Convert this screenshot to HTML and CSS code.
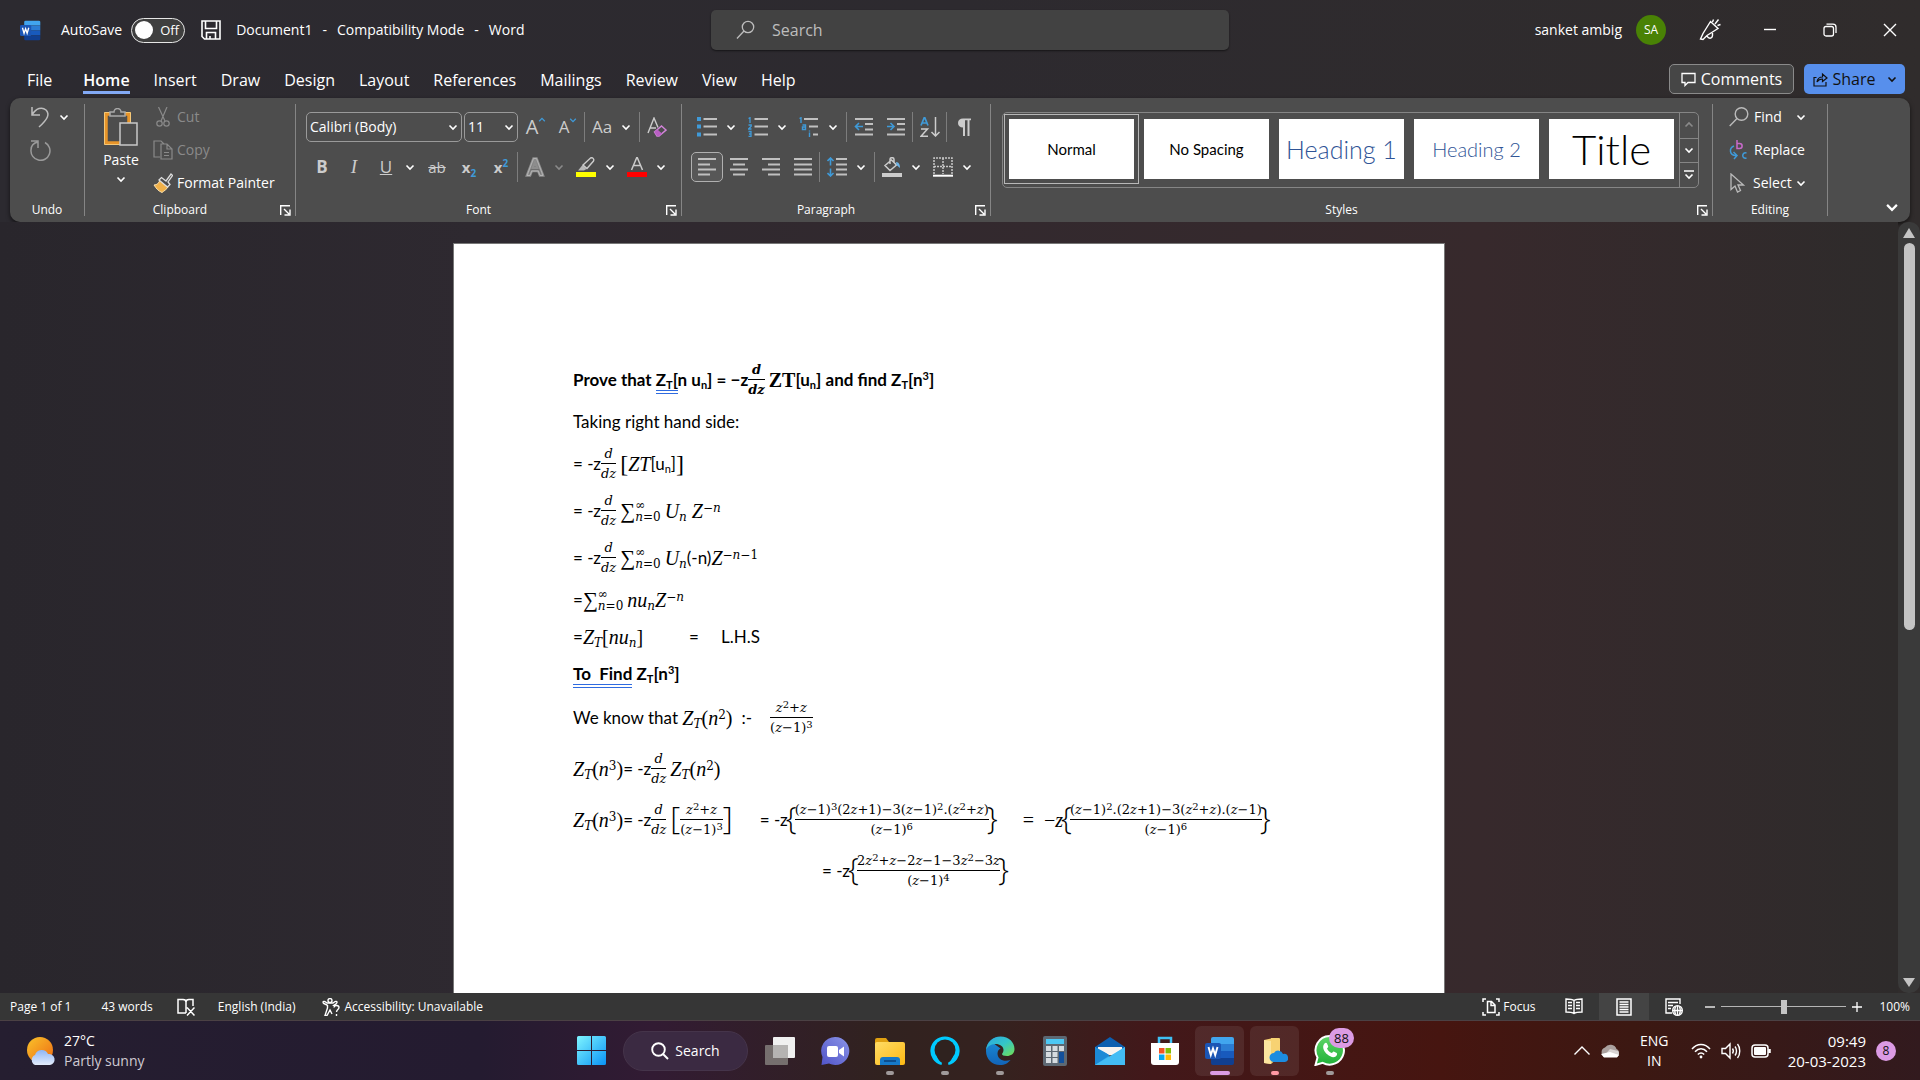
FILE: index.html
```html
<!DOCTYPE html>
<html lang="en">
<head>
<meta charset="utf-8">
<title>Document1 - Compatibility Mode - Word</title>
<link rel="stylesheet" href="styles.css">
</head>
<body>
<svg class="defs" width="0" height="0" aria-hidden="true">
  <defs>
    <symbol id="chev" viewBox="0 0 10 10"><path d="M1.500 3.500 5 7l3.500-3.500" fill="none" stroke="currentColor" stroke-width="1.600"/></symbol>
    <symbol id="chevup" viewBox="0 0 10 10"><path d="M1.500 6.500 5 3l3.500 3.500" fill="none" stroke="currentColor" stroke-width="1.600"/></symbol>
    <symbol id="launch" viewBox="0 0 11 11"><path d="M.7 10V.7H10M4 4l5 5M10 4.500V10H4.500" fill="none" stroke="currentColor" stroke-width="1.400"/></symbol>
    <linearGradient id="gWin" x1="0" y1="0" x2="1" y2="1"><stop offset="0" stop-color="#7ff5ff"/><stop offset="1" stop-color="#0a93f5"/></linearGradient>
    <linearGradient id="gSun" x1="0" y1="0" x2="1" y2="1"><stop offset="0" stop-color="#f9c32b"/><stop offset="1" stop-color="#ee6a12"/></linearGradient>
    <linearGradient id="gCloud" x1="0" y1="0" x2="0" y2="1"><stop offset="0" stop-color="#8fb6f5"/><stop offset="1" stop-color="#e3ecfb"/></linearGradient>
    <linearGradient id="gChat" x1="1" y1="0" x2="0" y2="1"><stop offset="0" stop-color="#8b94e8"/><stop offset="1" stop-color="#5054c8"/></linearGradient>
    <linearGradient id="gFold" x1="0" y1="0" x2="1" y2="1"><stop offset="0" stop-color="#ffdc66"/><stop offset="1" stop-color="#fdb913"/></linearGradient>
    <linearGradient id="gEdge" x1="0" y1="0" x2="1" y2="1"><stop offset="0" stop-color="#2ba5e0"/><stop offset=".5" stop-color="#34c6c8"/><stop offset="1" stop-color="#74e04e"/></linearGradient>
    <linearGradient id="gEdge2" x1="0" y1="0" x2="0" y2="1"><stop offset="0" stop-color="#1b8fd8"/><stop offset="1" stop-color="#1264b8"/></linearGradient>
    <linearGradient id="gWa" x1="0" y1="0" x2="0" y2="1"><stop offset="0" stop-color="#5fd668"/><stop offset="1" stop-color="#20b038"/></linearGradient>
    <symbol id="word" viewBox="0 0 30 30">
      <path d="M8 1h19a2 2 0 0 1 2 2v5H6V3a2 2 0 0 1 2-2z" fill="#41a5ee"/><path d="M6 8h23v7H6z" fill="#2b7cd3"/><path d="M6 15h23v7H6z" fill="#185abd"/><path d="M6 22h23v5a2 2 0 0 1-2 2H8a2 2 0 0 1-2-2z" fill="#103f91"/>
      <rect x="0" y="7" width="16" height="16" rx="2" fill="#1b56b5"/>
      <path d="M3.500 11 5.800 19 8 12.500 10.200 19 12.500 11" fill="none" stroke="#fff" stroke-width="1.900"/>
    </symbol>
  </defs>
</svg>

<div class="app">
  <header class="titlebar">
    <div class="title-left">
      <svg class="logo" width="21" height="21"><use href="#word"/></svg>
      <label class="autosave">AutoSave
        <span class="toggle"><input type="checkbox" role="switch"><span>Off</span></span>
      </label>
      <button class="plain save" aria-label="Save"><svg width="20" height="20" viewBox="0 0 20 20" fill="none" stroke="currentColor" stroke-width="1.600"><path d="M1 1h18v18H3.500L1 16.500zM4.500 1v7.500h11V1M5.500 19v-6.500h9V19M9 19v-3"/></svg></button>
      <div class="doc-title"><span>Document1</span><span>-</span><span>Compatibility Mode</span><span>-</span><span>Word</span></div>
    </div>
    <label class="search">
      <svg width="20" height="20" viewBox="0 0 20 20" fill="none" stroke="currentColor" stroke-width="1.300"><circle cx="12" cy="7" r="5.700"/><path d="M8 11 1 18.500"/></svg>
      <input type="text" placeholder="Search" aria-label="Search">
    </label>
    <div class="title-right">
      <span class="user">sanket ambig</span>
      <span class="avatar">SA</span>
      <button class="plain win" aria-label="Drawing tools"><svg width="22" height="22" viewBox="0 0 22 22" fill="none" stroke="currentColor" stroke-width="1.400"><path d="M1.500 20 4 14.500 11.500 2.500 19 9.500 8 16.500 4 20.500zM8 17c1.500 3 5 3 5.500-.5V14M13.500 3l1-2.500M16 5l3.500-4.500M18.500 6.500l3-1"/></svg></button>
      <button class="plain win" aria-label="Minimize"><svg width="14" height="14" viewBox="0 0 14 14"><path d="M1 6.500h12" stroke="currentColor" stroke-width="1.400"/></svg></button>
      <button class="plain win" aria-label="Restore"><svg width="14" height="14" viewBox="0 0 14 14" fill="none" stroke="currentColor" stroke-width="1.300"><rect x="1" y="3.500" width="9.500" height="9.500" rx="2"/><path d="M3.500 1.200H10a3 3 0 0 1 3 3V10"/></svg></button>
      <button class="plain win" aria-label="Close"><svg width="14" height="14" viewBox="0 0 14 14"><path d="M1 1l12 12M13 1 1 13" stroke="currentColor" stroke-width="1.400"/></svg></button>
    </div>
  </header>

  <nav class="tabs">
    <button>File</button><button class="active">Home</button><button>Insert</button><button>Draw</button><button>Design</button><button>Layout</button><button>References</button><button>Mailings</button><button>Review</button><button>View</button><button>Help</button>
    <div class="tab-actions">
      <button class="comments"><svg width="15" height="15" viewBox="0 0 15 15" fill="none" stroke="currentColor" stroke-width="1.300"><path d="M1 1.500h13v9H7L4 13.500v-3H1z"/></svg>Comments</button>
      <button class="share"><svg width="15" height="15" viewBox="0 0 15 15" fill="none" stroke="currentColor" stroke-width="1.200"><path d="M3.500 5.500H1v8.500h12v-4M4 10c.5-3.500 3-5 5.500-5V2L14 6l-4.500 3.500V7C7.500 7 5.500 7.800 4 10z"/></svg>Share<svg class="share-chev" width="10" height="10"><use href="#chev"/></svg></button>
    </div>
  </nav>

  <section class="ribbon">
    <div class="group g-undo">
      <div class="stack">
        <div class="row3"><button class="plain" aria-label="Undo"><svg width="21" height="22" viewBox="0 0 21 22" fill="none" stroke="#bdbdbd" stroke-width="1.500"><path d="M2 1v8h8M2 9C6 2 12 .5 16 4c4 4 2 9-7 17"/></svg></button><button class="plain" aria-label="Undo options"><svg width="10" height="10"><use href="#chev"/></svg></button></div>
        <div class="row3"><button class="plain" aria-label="Redo"><svg width="21" height="22" viewBox="0 0 21 22" fill="none" stroke="#9a9a9a" stroke-width="1.500"><path d="M1 2h7v7M8 3C3 4 1 7.500 1 11a9.500 9.500 0 1 0 14-7.500"/></svg></button></div>
      </div>
      <div class="label">Undo</div>
    </div>

    <div class="group g-clip">
      <div class="clip">
        <button class="plain paste">
          <svg width="34" height="38" viewBox="0 0 34 38"><path d="M2 6h23v29H2z" fill="none" stroke="#e8952a" stroke-width="3.500"/><path d="M.5 4.500h26v32H.5z" fill="none" stroke="#f5c878" stroke-width="1"/><path d="M6 8V4h4a3.500 3.500 0 0 1 7 0h4v4z" fill="#4d4d4d" stroke="#a8a8a8" stroke-width="1.500"/><rect x="16" y="15" width="17" height="22" fill="#4d4d4d" stroke="#c8c8c8" stroke-width="1.500"/></svg>
          <span>Paste</span><svg width="10" height="10"><use href="#chev"/></svg>
        </button>
        <div class="stack">
          <button class="plain row3 off"><svg width="20" height="20" viewBox="0 0 20 20" fill="none" stroke="currentColor" stroke-width="1.200"><path d="M5.500 0 12 14M14 0 8 14"/><circle cx="6.500" cy="16.500" r="2.700"/><circle cx="13.500" cy="16.500" r="2.700"/></svg>Cut</button>
          <button class="plain row3 off"><svg width="20" height="20" viewBox="0 0 20 20" fill="none" stroke="currentColor" stroke-width="1.200"><path d="M7 17H1V1h7l3 3M8 4h6l5 5v10H8zM14 4v5h5M11 12.500h5M11 15.500h5"/></svg>Copy</button>
          <button class="plain row3"><svg width="20" height="20" viewBox="0 0 20 20"><path d="M1 12c3 0 5-2 6-5l8 7c-1 2-4 4-6 5.500C5 18 3 15 1 12z" fill="#f0b14a" stroke="#fde2ae"/><path d="M6 7l2.500-2.500L13 8l5-7 1.500 1.500L15 9l2 2.500-2.500 2.500z" fill="#4d4d4d" stroke="#ddd" stroke-width="1.300"/></svg>Format Painter</button>
        </div>
      </div>
      <div class="label has-launch">Clipboard<button class="plain launch" aria-label="Clipboard settings"><svg width="11" height="11"><use href="#launch"/></svg></button></div>
    </div>

    <div class="group g-font">
      <div class="tools">
        <div class="tool-row">
          <span class="combo font-name"><select aria-label="Font"><option>Calibri (Body)</option></select><svg width="10" height="10"><use href="#chev"/></svg></span>
          <span class="combo font-size"><select aria-label="Font size"><option>11</option></select><svg width="10" height="10"><use href="#chev"/></svg></span>
          <button class="ib" aria-label="Grow font"><span class="glyph g20">A</span><svg class="blue hat" width="8" height="8"><use href="#chevup"/></svg></button>
          <button class="ib" aria-label="Shrink font"><span class="glyph g17">A</span><svg class="blue hat" width="8" height="8"><use href="#chev"/></svg></button>
          <i class="sep"></i>
          <button class="ib" aria-label="Change case"><span class="glyph g17">Aa</span></button><button class="cv" aria-label="Case options"><svg width="10" height="10"><use href="#chev"/></svg></button>
          <i class="sep wide"></i>
          <button class="ib" aria-label="Clear formatting"><svg width="20" height="20" viewBox="0 0 20 20" fill="none"><path d="M1 16 7 1l4 9.500M3.200 11H9" stroke="#ccc" stroke-width="1.400"/><path d="m7.500 15 7-6 4.500 4-7 6H10z" stroke="#d183d8" stroke-width="1.500"/><path d="m7.500 15 3-2.500 4.500 4-3 2.500H10z" fill="#b95fc4"/></svg></button>
        </div>
        <div class="tool-row">
          <button class="ib" aria-label="Bold"><b class="glyph g17">B</b></button>
          <button class="ib" aria-label="Italic"><em class="glyph g17 serif">I</em></button>
          <button class="ib" aria-label="Underline"><u class="glyph g17">U</u></button><button class="cv" aria-label="Underline options"><svg width="10" height="10"><use href="#chev"/></svg></button>
          <button class="ib after" aria-label="Strikethrough"><s class="glyph g15">ab</s></button>
          <button class="ib" aria-label="Subscript"><span class="glyph g15"><b>x</b><sub>2</sub></span></button>
          <button class="ib" aria-label="Superscript"><span class="glyph g15"><b>x</b><sup>2</sup></span></button>
          <i class="sep"></i>
          <button class="ib" aria-label="Text effects"><svg width="22" height="20" viewBox="0 0 22 20" fill="none"><path d="m3 18.500 6.500-17h3l6.500 17h-3L14.200 14H7.800L6 18.500zM8.800 11h4.400L11 5z" stroke="#8d8d8d" stroke-width="2.600"/><path d="m3 18.500 6.500-17h3l6.500 17h-3L14.200 14H7.800L6 18.500z" stroke="#bbb" stroke-width=".8"/></svg></button><button class="cv off" aria-label="Effect options"><svg width="10" height="10"><use href="#chev"/></svg></button>
          <button class="ib after" aria-label="Highlight"><svg width="20" height="20" viewBox="0 0 20 20"><path d="M2 13.500 6.500 8l4 4-2.500 1.500z" fill="#b8b8b8"/><path d="M7 8 14.500 1c2-1 4 1 3 3L11 11.500z" fill="none" stroke="#ccc" stroke-width="1.400"/><path d="M0 15h20v5H0z" fill="#ff0"/></svg></button><button class="cv" aria-label="Highlight options"><svg width="10" height="10"><use href="#chev"/></svg></button>
          <button class="ib after" aria-label="Font color"><svg width="20" height="20" viewBox="0 0 20 20"><path d="m4.500 13 5.500-13 5.500 13M6.500 8.500h7" fill="none" stroke="#ccc" stroke-width="1.500"/><path d="M0 15h20v5H0z" fill="#f00"/></svg></button><button class="cv" aria-label="Color options"><svg width="10" height="10"><use href="#chev"/></svg></button>
        </div>
      </div>
      <div class="label has-launch">Font<button class="plain launch" aria-label="Font settings"><svg width="11" height="11"><use href="#launch"/></svg></button></div>
    </div>

    <div class="group g-para">
      <div class="tools">
        <div class="tool-row">
          <button class="ib" aria-label="Bullets"><svg width="20" height="20" viewBox="0 0 20 20"><path d="M0 0h4v4H0zM0 7.500h4v4H0zM0 15.500h4v4H0z" fill="#3f9ad8"/><path d="M6.500 2H20M6.500 9.500H20M6.500 17.500H20" stroke="#c0c0c0" stroke-width="2"/></svg></button><button class="cv" aria-label="Bullet options"><svg width="10" height="10"><use href="#chev"/></svg></button>
          <button class="ib after" aria-label="Numbering"><svg width="20" height="20" viewBox="0 0 20 20"><path d="M.5 1.500 2 .7V6M.5 8h2.700v1.300L.5 12h3M.5 14.500H3v5H.5M1 17h2" fill="none" stroke="#3f9ad8" stroke-width="1.300"/><path d="M6.500 2H20M6.500 9.500H20M6.500 17.500H20" stroke="#c0c0c0" stroke-width="2"/></svg></button><button class="cv" aria-label="Numbering options"><svg width="10" height="10"><use href="#chev"/></svg></button>
          <button class="ib after" aria-label="Multilevel list"><svg width="20" height="20" viewBox="0 0 20 20"><path d="M.5 1.500 2 .7V6M3.500 8h3v4.500h-3V10h3M10.500 13.500v1M10.500 15.500V20" fill="none" stroke="#3f9ad8" stroke-width="1.400"/><path d="M5 2h14M10 9.500h9M14 17.500h5" stroke="#c0c0c0" stroke-width="2"/></svg></button><button class="cv" aria-label="Multilevel options"><svg width="10" height="10"><use href="#chev"/></svg></button>
          <i class="sep wide"></i>
          <button class="ib" aria-label="Decrease indent"><svg width="20" height="20" viewBox="0 0 20 20"><path d="M1 2h18M11 7h8M11 12.500h8M1 17.500h18" stroke="#c0c0c0" stroke-width="2"/><path d="M9 9.500H2M5 6 1.500 9.500 5 13" fill="none" stroke="#3f9ad8" stroke-width="1.600"/></svg></button>
          <button class="ib" aria-label="Increase indent"><svg width="20" height="20" viewBox="0 0 20 20"><path d="M1 2h18M11 7h8M11 12.500h8M1 17.500h18" stroke="#c0c0c0" stroke-width="2"/><path d="M1 9.500h7M4.500 6 8 9.500 4.500 13" fill="none" stroke="#3f9ad8" stroke-width="1.600"/></svg></button>
          <i class="sep"></i>
          <button class="ib" aria-label="Sort"><svg width="20" height="20" viewBox="0 0 20 20" fill="none"><path d="M1 8.500 4.500 0 8 8.500M2 6h5" stroke="#3f9ad8" stroke-width="1.700"/><path d="M1 12h6.500L1 19.300h7" stroke="#ccc" stroke-width="1.500"/><path d="M15.500 0v19M11.500 15l4 4 4-4" stroke="#ccc" stroke-width="1.500"/></svg></button>
          <i class="sep"></i>
          <button class="ib" aria-label="Show marks"><svg width="14" height="18" viewBox="0 0 14 18"><path d="M14 .5v1.800h-1.500V18h-2V2.300H8V18H6V9.500C3 9.500 1 7.800 1 5S3 .5 6 .5z" fill="#ccc"/></svg></button>
        </div>
        <div class="tool-row">
          <button class="ib pressed" aria-label="Align left"><svg width="20" height="20" viewBox="0 0 20 20"><path d="M1 2h18M1 7.500h12M1 12.500h18M1 17.500h12" stroke="#c0c0c0" stroke-width="2"/></svg></button>
          <button class="ib" aria-label="Center"><svg width="20" height="20" viewBox="0 0 20 20"><path d="M1 2h18M4 7.500h12M1 12.500h18M4 17.500h12" stroke="#c0c0c0" stroke-width="2"/></svg></button>
          <button class="ib" aria-label="Align right"><svg width="20" height="20" viewBox="0 0 20 20"><path d="M1 2h18M7 7.500h12M1 12.500h18M7 17.500h12" stroke="#c0c0c0" stroke-width="2"/></svg></button>
          <button class="ib" aria-label="Justify"><svg width="20" height="20" viewBox="0 0 20 20"><path d="M1 2h18M1 7.500h18M1 12.500h18M1 17.500h18" stroke="#c0c0c0" stroke-width="2"/></svg></button>
          <i class="sep"></i>
          <button class="ib" aria-label="Line spacing"><svg width="20" height="20" viewBox="0 0 20 20"><path d="M9 2h11M9 7.500h11M9 12.500h11M9 17.500h11" stroke="#c0c0c0" stroke-width="2"/><path d="M3.500 1v7.500M.5 4l3-3 3 3M3.500 11.500V19M.5 16l3 3 3-3" fill="none" stroke="#3f9ad8" stroke-width="1.600"/></svg></button><button class="cv" aria-label="Spacing options"><svg width="10" height="10"><use href="#chev"/></svg></button>
          <i class="sep wide"></i>
          <button class="ib" aria-label="Shading"><svg width="20" height="20" viewBox="0 0 20 20"><path d="M3 8.500 9.500 3l5 5-6.500 5.500zM8 7V2.500c0-2.500 4-2.500 4 0V5" fill="none" stroke="#ccc" stroke-width="1.500"/><path d="M14 5c3 0 4 3 4 6l-3.500-3z" fill="#6cb4e8"/><path d="M0 16h20v4H0z" fill="#ccc"/></svg></button><button class="cv" aria-label="Shading options"><svg width="10" height="10"><use href="#chev"/></svg></button>
          <button class="ib after" aria-label="Borders"><svg width="20" height="20" viewBox="0 0 20 20"><path d="M1 17V1h18v16M10 1v16M1 9.500h18" fill="none" stroke="#c8c8c8" stroke-width="1.500" stroke-dasharray="2 1"/><path d="M0 18.700h20" stroke="#fff" stroke-width="2"/></svg></button><button class="cv" aria-label="Border options"><svg width="10" height="10"><use href="#chev"/></svg></button>
        </div>
      </div>
      <div class="label has-launch">Paragraph<button class="plain launch" aria-label="Paragraph settings"><svg width="11" height="11"><use href="#launch"/></svg></button></div>
    </div>

    <div class="group g-styles">
      <div class="gallery">
        <div class="cards">
          <button class="card selected"><span>Normal</span></button>
          <button class="card"><span>No Spacing</span></button>
          <button class="card h1"><span>Heading 1</span></button>
          <button class="card h2"><span>Heading 2</span></button>
          <button class="card title"><span>Title</span></button>
        </div>
        <div class="spin">
          <button class="off" aria-label="Scroll up"><svg width="10" height="10"><use href="#chevup"/></svg></button>
          <button aria-label="Scroll down"><svg width="10" height="10"><use href="#chev"/></svg></button>
          <button aria-label="More styles"><svg width="10" height="12" viewBox="0 0 10 12"><path d="M0 2h10M1.500 5.500 5 9l3.500-3.500" fill="none" stroke="currentColor" stroke-width="1.600"/></svg></button>
        </div>
      </div>
      <div class="label has-launch">Styles<button class="plain launch" aria-label="Styles settings"><svg width="11" height="11"><use href="#launch"/></svg></button></div>
    </div>

    <div class="group g-edit">
      <div class="stack">
        <button class="plain row3"><svg width="20" height="20" viewBox="0 0 20 20" fill="none" stroke="#bbb" stroke-width="1.400"><circle cx="12.500" cy="7" r="6.300"/><path d="M8 11.500.7 19"/></svg>Find<svg class="find-chev" width="10" height="10"><use href="#chev"/></svg></button>
        <button class="plain row3"><svg width="20" height="20" viewBox="0 0 20 20" fill="none" stroke-width="1.500"><path d="M8 0v8.500h2.500c3.500 0 3.500-5 0-5H8" stroke="#c86acb"/><path d="M17.500 13c-5-1.500-5 6.500 0 5M5 6c-5 2-5 9 2 9.500M4.500 12l3.500 3.500L5 19" stroke="#3f9ad8"/></svg>Replace</button>
        <button class="plain row3 select"><svg width="20" height="20" viewBox="0 0 20 20" fill="none" stroke="#bbb" stroke-width="1.300"><path d="M2 1v15.500l4-3.500 2.500 6 3-1.500L9 12h5.500z"/></svg>Select<svg width="10" height="10"><use href="#chev"/></svg></button>
      </div>
      <div class="label">Editing</div>
    </div>
    <button class="plain collapse" aria-label="Collapse ribbon"><svg width="14" height="14" viewBox="0 0 10 10"><use href="#chev"/></svg></button>
  </section>

  <main class="canvas">
    <div class="desk">
      <article class="page">
        <p class="ln frac-ln bold"><span>Prove that <span class="gram">Z<sub>T</sub>[</span>n u<sub>n</sub>] = −z</span><span class="fr"><i>d</i><i>dz</i></span><span class="m">ZT</span><span>[u<sub>n</sub>] and find Z<sub>T</sub>[n<sup>3</sup>]</span></p>
        <p class="ln"><span>Taking right hand side:</span></p>
        <p class="ln frac-ln"><span>= -z</span><span class="fr"><i>d</i><i>dz</i></span><span class="big">[</span><span class="m"><i>ZT</i></span><span>[u<sub>n</sub>]</span><span class="big">]</span></p>
        <p class="ln frac-ln"><span>= -z</span><span class="fr"><i>d</i><i>dz</i></span><span class="m sum">∑</span><span class="lim"><span>∞</span><span><i>n</i>=0</span></span><span class="m"><i>U<sub>n</sub> Z</i><sup>−<i>n</i></sup></span></p>
        <p class="ln frac-ln"><span>= -z</span><span class="fr"><i>d</i><i>dz</i></span><span class="m sum">∑</span><span class="lim"><span>∞</span><span><i>n</i>=0</span></span><span class="m"><i>U<sub>n</sub></i></span><span>(-n)</span><span class="m"><i>Z</i><sup>−<i>n</i>−1</sup></span></p>
        <p class="ln"><span>=</span><span class="m sum">∑</span><span class="lim"><span>∞</span><span><i>n</i>=0</span></span><span class="m"><i>nu<sub>n</sub>Z</i><sup>−<i>n</i></sup></span></p>
        <p class="ln"><span>=</span><span class="m"><i>Z<sub>T</sub></i>[<i>nu<sub>n</sub></i>]</span><span class="tab">=</span><span class="tab2">L.H.S</span></p>
        <p class="ln bold"><span><span class="gram">To&nbsp; Find</span> Z<sub>T</sub>[n<sup>3</sup>]</span></p>
        <p class="ln wide-ln"><span>We know that </span><span class="m"><i>Z<sub>T</sub></i>(<i>n</i><sup>2</sup>)</span><span class="colon">:-</span><span class="fr"><span><i>z</i><sup>2</sup>+<i>z</i></span><span>(<i>z</i>−1)<sup>3</sup></span></span></p>
        <p class="ln wide-ln"><span class="m"><i>Z<sub>T</sub></i>(<i>n</i><sup>3</sup>)</span><span>= -z</span><span class="fr"><i>d</i><i>dz</i></span><span class="m"><i>Z<sub>T</sub></i>(<i>n</i><sup>2</sup>)</span></p>
        <p class="ln wide-ln"><span class="m"><i>Z<sub>T</sub></i>(<i>n</i><sup>3</sup>)</span><span>= -z</span><span class="fr"><i>d</i><i>dz</i></span><span class="huge">[</span><span class="fr tight"><span><i>z</i><sup>2</sup>+<i>z</i></span><span>(<i>z</i>−1)<sup>3</sup></span></span><span class="huge">]</span><span class="step">= -z</span><span class="huge brace">{</span><span class="fr tight"><span>(<i>z</i>−1)<sup>3</sup>(2<i>z</i>+1)−3(<i>z</i>−1)<sup>2</sup>.(<i>z</i><sup>2</sup>+<i>z</i>)</span><span>(<i>z</i>−1)<sup>6</sup></span></span><span class="huge brace">}</span><span class="m step">=&nbsp; −<i>z</i></span><span class="huge brace">{</span><span class="fr tight"><span>(<i>z</i>−1)<sup>2</sup>.(2<i>z</i>+1)−3(<i>z</i><sup>2</sup>+<i>z</i>).(<i>z</i>−1)</span><span>(<i>z</i>−1)<sup>6</sup></span></span><span class="huge brace">}</span></p>
        <p class="ln wide-ln indent"><span>= -z</span><span class="huge brace">{</span><span class="fr tight"><span>2<i>z</i><sup>2</sup>+<i>z</i>−2<i>z</i>−1−3<i>z</i><sup>2</sup>−3<i>z</i></span><span>(<i>z</i>−1)<sup>4</sup></span></span><span class="huge brace">}</span></p>
      </article>
    </div>
    <div class="scroll">
      <svg width="12" height="10" viewBox="0 0 12 10"><path d="M6 0l6 10H0z" fill="#c4c4c4"/></svg>
      <div class="track"><div class="thumb"></div></div>
      <svg width="12" height="9" viewBox="0 0 12 9"><path d="M0 0h12L6 9z" fill="#c4c4c4"/></svg>
    </div>
  </main>

  <footer class="status">
    <span class="st-page">Page 1 of 1</span>
    <span class="st-words">43 words</span>
    <svg class="st-proof" width="18" height="18" viewBox="0 0 18 18" fill="none" stroke="currentColor" stroke-width="1.500"><path d="M9 15H1V1.500h5c2 0 3 1 3 2.500 0-1.500 1-2.500 3-2.500h4V8M9 4v11M10 9.500l7.500 8M17.500 9.500l-7.500 8"/></svg>
    <span class="st-lang">English (India)</span>
    <svg width="18" height="18" viewBox="0 0 18 18" fill="none" stroke="currentColor" stroke-width="1.400"><circle cx="8" cy="2.500" r="2"/><path d="M1 4.500c0-2 2-1 4 .5h6c2-1.500 4-2.500 4-.5S11 7 11 8M5.500 7v3L3 17.500h2L8 12l2 4M1 4.500C1.500 6.500 5.500 6 5.500 8M12 9.500c.5-3 5-2.500 5 0 0 2-2.500 2-2.500 4.500M14.500 16v2"/></svg>
    <span class="st-acc">Accessibility: Unavailable</span>
    <div class="status-right">
      <button class="plain focus"><svg width="18" height="18" viewBox="0 0 18 18" fill="none" stroke="currentColor" stroke-width="1.500"><path d="M4 1H1v3M14 1h3v3M4 17H1v-3M14 17h3v-3M5.500 3.500h4l3.500 3.500v7.500H5.500zM9 3.500V7.500h4"/></svg>Focus</button>
      <button class="view" aria-label="Read mode"><svg width="18" height="17" viewBox="0 0 18 17" fill="none" stroke="currentColor" stroke-width="1.400"><path d="M9 2.500C7 1 4 1 1 1v13c3 0 6 0 8 1.500C11 14 14 14 17 14V1c-3 0-6 0-8 1.500zv13M3 4.500h4M3 7.500h4M3 10.500h4M11 4.500h4M11 7.500h4M11 10.500h4"/></svg></button>
      <button class="view on" aria-label="Print layout"><svg width="16" height="18" viewBox="0 0 16 18" fill="none" stroke="currentColor" stroke-width="1.500"><path d="M1 1h14v16H1zM3.500 4h9M3.500 6.500h9M3.500 9h9M3.500 11.500h9M3.500 14h9"/></svg></button>
      <button class="view" aria-label="Web layout"><svg width="18" height="18" viewBox="0 0 18 18" fill="none" stroke="currentColor" stroke-width="1.400"><path d="M7 15H1V1h14v5M3 4.500h10M3 7.500h5M3 10.500h3"/><circle cx="12.500" cy="12.500" r="4.800"/><path d="M7.500 12.500h10M12.500 8v9.500M10.500 8.500c-1 2-1 6 0 8M14.500 8.500c1 2 1 6 0 8"/></svg></button>
      <button class="plain zoom-btn" aria-label="Zoom out"><svg width="10" height="10" viewBox="0 0 10 10"><path d="M0 5h10" stroke="currentColor" stroke-width="1.300"/></svg></button>
      <input class="zoom" type="range" min="10" max="190" value="100" aria-label="Zoom">
      <button class="plain zoom-btn" aria-label="Zoom in"><svg width="10" height="10" viewBox="0 0 10 10"><path d="M0 5h10M5 0v10" stroke="currentColor" stroke-width="1.300"/></svg></button>
      <span class="pct">100%</span>
    </div>
  </footer>

  <div class="taskbar">
    <div class="weather">
      <svg width="30" height="30" viewBox="0 0 30 30"><circle cx="13" cy="14" r="13" fill="url(#gSun)"/><path d="M8 29a5.500 5.500 0 0 1 0-10 7 7 0 0 1 13-1 5.500 5.500 0 0 1 2 11z" fill="url(#gCloud)"/></svg>
      <div><div>27°C</div><div class="dim">Partly sunny</div></div>
    </div>
    <div class="dock">
      <button class="app-ic start" aria-label="Start"><svg width="29" height="29" viewBox="0 0 29 29"><path d="M0 1.500A1.500 1.500 0 0 1 1.500 0H14v14H0zM15 0h12.500A1.500 1.500 0 0 1 29 1.500V14H15zM0 15h14v14H1.500A1.500 1.500 0 0 1 0 27.500zM15 15h14v12.500a1.500 1.500 0 0 1-1.500 1.500H15z" fill="url(#gWin)"/></svg></button>
      <button class="tsearch"><svg width="18" height="18" viewBox="0 0 18 18" fill="none" stroke="#fff" stroke-width="1.900"><circle cx="7.500" cy="7.500" r="6.300"/><path d="m12 12 5 5"/></svg>Search</button>
      <button class="app-ic" aria-label="Task view"><svg width="30" height="28" viewBox="0 0 30 28"><rect x="8" width="22" height="21" rx="1" fill="#f0f0f0"/><rect y="8" width="23" height="20" rx="1" fill="#7d7876" opacity=".9"/><path d="M8 8h15v13H8z" fill="#b5b3b2"/></svg></button>
      <button class="app-ic" aria-label="Chat"><svg width="30" height="30" viewBox="0 0 30 30"><path d="M15 1a14 14 0 1 1-6 26.500L1.500 29 2.500 21A14 14 0 0 1 15 1z" fill="url(#gChat)"/><rect x="7" y="10" width="11" height="11" rx="2" fill="#fff"/><path d="m19 14 5-3.500v10L19 17z" fill="#fff"/></svg></button>
      <button class="app-ic run" aria-label="File Explorer"><svg width="30" height="28" viewBox="0 0 30 28"><path d="M0 3a2 2 0 0 1 2-2h9l3 4h-3v6H0z" fill="#e0a010"/><path d="M0 7a2 2 0 0 1 2-2h26a2 2 0 0 1 2 2v19a2 2 0 0 1-2 2H2a2 2 0 0 1-2-2z" fill="url(#gFold)"/><path d="M5 28v-5a3 3 0 0 1 3-3h14a3 3 0 0 1 3 3v5z" fill="#1679c8"/><path d="M9 24h12" stroke="#0c4e8e" stroke-width="2"/></svg></button>
      <button class="app-ic run" aria-label="Alexa"><svg width="30" height="30" viewBox="0 0 30 30"><path d="M15 .5a14.500 14.500 0 0 1 3.500 28.600l-.5-2.300c3.500-2 5.500-6 5.500-11.800a8.500 10.500 0 0 0-17 0C6.500 21 8.500 25 12 26.800l-.5 2.300A14.500 14.500 0 0 1 15 .5z" fill="#00caff"/><circle cx="15" cy="14" r="10.500" fill="#2f221f"/></svg></button>
      <button class="app-ic run" aria-label="Edge"><svg width="30" height="30" viewBox="0 0 30 30"><path d="M15 1C7 1 1 7 1 15s6 14 14 14c5 0 8-2 10.500-5-7 2.500-13-1-13-6.500 0-2.500 1.500-4.500 3-5L8 7z" fill="url(#gEdge2)"/><path d="M1 15C1.500 6 8 .5 15.500.5 24 .5 29.500 6.500 29.500 13c0 5-4 7-7.500 7s-5-1-5-2c0-.5 1.500-1.500 1.500-4 0-3.500-3.500-6-8-6-5 0-9 3-9.500 7z" fill="url(#gEdge)"/></svg></button>
      <button class="app-ic" aria-label="Calculator"><svg width="24" height="30" viewBox="0 0 24 30"><rect width="24" height="30" rx="2" fill="#5d6873"/><path d="M3 3h18v5H3z" fill="#4cc8f5"/><path d="M3 10h5v5H3zM9.500 10h5v5h-5zM16 10h5v5h-5zM3 16h5v5H3zM9.500 16h5v5h-5zM3 22h5v5H3zM9.500 22h5v5h-5z" fill="#d5dbe0"/><path d="M16 16h5v11h-5z" fill="#12509c"/></svg></button>
      <button class="app-ic" aria-label="Mail"><svg width="30" height="30" viewBox="0 0 30 30"><path d="M0 11 15 1l15 10v3H0z" fill="#0c5fb0"/><path d="M3 11h24v8H3z" fill="#f5f5f5"/><path d="M0 11v18h30V11L15 21z" fill="#2aa5ea"/><path d="M0 29 15 19 0 11z" fill="#1c8ad6"/><path d="M0 29 30 11v18z" fill="#43bcf4"/><path d="M3 11h24L15 19.500z" fill="#f7f3ef"/></svg></button>
      <button class="app-ic" aria-label="Microsoft Store"><svg width="30" height="30" viewBox="0 0 30 30"><path d="M9 8V2h12v6" fill="none" stroke="#3fc0f4" stroke-width="2.500"/><path d="M1 7h28v19a3 3 0 0 1-3 3H4a3 3 0 0 1-3-3z" fill="#fff"/><path d="M9 12h5.500v5.500H9z" fill="#f35325"/><path d="M15.500 12H21v5.500h-5.500z" fill="#81bc06"/><path d="M9 18.500h5.500V24H9z" fill="#05a6f0"/><path d="M15.500 18.500H21V24h-5.500z" fill="#ffba08"/></svg></button>
      <button class="app-ic current" aria-label="Word"><svg width="30" height="30"><use href="#word"/></svg></button>
      <button class="app-ic alert" aria-label="Folder"><svg width="26" height="28" viewBox="0 0 26 28"><path d="M2 3 9 1.500V1h8a1 1 0 0 1 1 1v17L9 27l-7-1z" fill="#f7d272"/><path d="M2 3l7 1v23l-7-1z" fill="#fbe59f"/><path d="M12 25a4.500 4.500 0 0 1 0-9 5 5 0 0 1 9 1 4 4 0 0 1 2 8z" fill="#1c8ce0"/></svg></button>
      <button class="app-ic run" aria-label="WhatsApp"><svg width="32" height="31" viewBox="0 0 32 31"><path d="M15.500 1a14.300 14.300 0 1 1-6.800 26.800L1.500 30l2-7.500A14.300 14.300 0 0 1 15.500 1z" fill="url(#gWa)" stroke="#fff" stroke-width="2"/><path d="M10.500 8.500c1-1 2-1 2.500 0l1.200 2.700c.3 1-1.200 2-1.200 2.300 1 2 2.500 3.500 4.700 4.500.5 0 1.500-1.800 2-1.600l3 1.500c1 .6 0 3-1 3.600-2.500 1.500-5.500.3-8.500-2.200-2.500-2-6-7-2.700-10.800z" fill="#fff"/></svg><span class="badge">88</span></button>
    </div>
    <div class="tray">
      <svg class="up" width="16" height="16" viewBox="0 0 16 16" fill="none" stroke="#fff" stroke-width="1.400"><path d="M.5 11.500 8 4l7.500 7.500"/></svg>
      <svg class="cloud" width="20" height="14" viewBox="0 0 20 14"><path d="M5 13a5 5 0 0 1 0-9.500A6.500 6.500 0 0 1 16.500 5a4.200 4.200 0 0 1-1 8z" fill="#aaa19f"/><path d="M3 13l7-8 8 2a4 4 0 0 1-1 6z" fill="#d8d4d3"/><path d="M1 10l9-2 9 3-2 2.500H4z" fill="#fff"/></svg>
      <div class="lang"><div>ENG</div><div>IN</div></div>
      <svg width="20" height="16" viewBox="0 0 20 16" fill="none" stroke="#fff" stroke-width="1.500"><path d="M1 6c5-6 13-6 18 0M4 8.800c3.500-4 8.500-4 12 0M6.800 11.500c2-2 4.500-2 6.400 0"/><circle cx="10" cy="14" r="1.400" fill="#fff" stroke="none"/></svg>
      <svg width="20" height="18" viewBox="0 0 20 18" fill="none" stroke="#fff" stroke-width="1.400"><path d="M1 6.500h3.500L9 2v14l-4.500-4.500H1zM11.500 6.500c1 1.500 1 3.500 0 5M14 4.500c2 2.500 2 6.500 0 9M16.500 2c3 3.500 3 10.500 0 14"/></svg>
      <svg width="20" height="14" viewBox="0 0 20 14"><rect x="1" y="1" width="16" height="12" rx="3" fill="none" stroke="#fff" stroke-width="1.500"/><rect x="3" y="3" width="12" height="8" rx="1" fill="#fff"/><path d="M18.500 5v4" stroke="#fff" stroke-width="2.500"/></svg>
      <div class="clock"><div>09:49</div><div>20-03-2023</div></div>
      <span class="notif">8</span>
    </div>
  </div>
</div>
</body>
</html>
```
FILE: styles.css
```css
* { box-sizing: border-box; }
html, body { height: 100%; }
body { margin: 0; font-family: "Open Sans", "Noto Sans", sans-serif; font-size: 14px; line-height: 20px; color: #fff; background: #2d2a2e; overflow: hidden; }
svg { display: block; flex: none; }
.defs { position: absolute; }
button { font: inherit; color: inherit; background: none; border: 0; padding: 0; margin: 0; display: flex; align-items: center; justify-content: center; flex: none; }
.off { color: #8a8a8a; }
sub, sup { font-size: 11px; line-height: 0; }
.app { min-height: 100vh; height: 100vh; display: flex; flex-direction: column; background: linear-gradient(90deg, #2c2a30 0%, #2d2a2f 50%, #302c2c 100%); }

/* title bar */
.titlebar { display: grid; grid-template-columns: 1fr 518px 1fr; align-items: center; height: 60px; flex: none; padding-left: 20px; }
.title-left, .title-right { display: flex; align-items: center; }
.title-left { gap: 16px; }
.title-right { justify-content: flex-end; }
.logo { margin-right: 4px; }
.autosave { display: flex; align-items: center; gap: 9px; }
.toggle { display: flex; align-items: center; width: 54px; height: 25px; border: 1px solid #e6e6e6; border-radius: 13px; background: #3f3f3f; padding-left: 3px; gap: 7px; font-size: 13px; }
.toggle input { appearance: none; margin: 0; width: 18px; height: 18px; border-radius: 50%; background: #fff; }
.doc-title { display: flex; gap: 10px; white-space: nowrap; margin-left: -1px; }
.search { display: flex; align-items: center; gap: 16px; height: 40px; padding-left: 25px; border-radius: 5px; background: #424242; color: #bdbdbd; box-shadow: 0 1px 2px #0008; }
.search input { flex: 1; border: 0; outline: 0; background: none; font: inherit; font-size: 16px; color: #fff; padding: 0; }
.search input::placeholder { color: #bdbdbd; opacity: 1; }
.avatar { width: 30px; height: 30px; border-radius: 50%; background: #498205; font-size: 12px; display: flex; align-items: center; justify-content: center; margin: 0 14px; }
.win { width: 60px; height: 40px; }

/* tabs */
.tabs { display: flex; align-items: center; height: 38px; flex: none; padding: 0 15px 0 27px; gap: 24px; font-size: 16px; }
.tabs > button { height: 30px; border-bottom: 3px solid transparent; padding-top: 4px; }
.tabs > button:first-child { margin-right: 7px; }
.tabs .active { font-weight: 600; border-bottom-color: #82a9f5; }
.tab-actions { margin-left: auto; display: flex; gap: 10px; }
.comments, .share { height: 30px; border-radius: 5px; gap: 5px; }
.comments { width: 125px; border: 1px solid #8a8a8a; background: #464646; }
.share { width: 101px; background: #578fec; color: #111; }
.share-chev { margin-left: 6px; }

/* ribbon */
.ribbon { display: flex; height: 124px; flex: none; margin: 0 10px; background: #4d4d4d; border-radius: 10px; box-shadow: 0 2px 4px #0009; padding: 6px 0; }
.group { display: flex; flex-direction: column; justify-content: space-between; border-right: 1px solid #858585; height: 112px; }
.label { position: relative; text-align: center; font-size: 12px; line-height: 12px; }
.has-launch { padding-right: 20px; }
.launch { position: absolute; right: 4px; top: 1px; }
.g-undo { width: 75px; }
.g-clip { width: 211px; }
.g-font { width: 386px; }
.g-para { width: 309px; }
.g-styles { flex: 1; }
.g-edit { width: 115px; }
.stack { display: flex; flex-direction: column; gap: 9px; padding-top: 1px; }
.row3 { display: flex; align-items: center; justify-content: flex-start; height: 24px; gap: 4px; }
.g-undo .stack { padding-left: 20px; }
.g-undo .row3 { gap: 8px; }
.clip { display: flex; padding-left: 18px; gap: 14px; }
.paste { flex-direction: column; width: 36px; padding-top: 4px; gap: 4px; justify-content: flex-start; }
.tools { display: flex; flex-direction: column; gap: 10px; padding: 8px 0 0 9px; }
.g-font .tools { padding-left: 10px; }
.tool-row { display: flex; align-items: center; height: 30px; }
.combo { position: relative; display: flex; align-items: center; border: 1px solid #9a9a9a; border-radius: 5px; height: 30px; margin-right: 2px; }
.combo svg { position: absolute; right: 3px; pointer-events: none; }
.combo select { appearance: none; border: 0; background: none; font: inherit; color: inherit; padding: 0 0 0 3px; width: 100%; height: 100%; }
.font-name { width: 156px; }
.font-size { width: 54px; }
.ib { width: 32px; height: 30px; }
.cv { width: 16px; height: 30px; }
.after { margin-left: 3px; }
.sep { width: 1px; height: 30px; background: #7d7d7d; margin: 0 1px 0 0; flex: none; }
.wide { margin-left: 5px; }
.glyph { color: #ccc; line-height: 20px; }
.g20 { font-size: 20px; }
.g17 { font-size: 17px; }
.g15 { font-size: 15px; }
.serif { font-family: "Liberation Serif", serif; font-size: 19px; }
.glyph sub, .glyph sup, .blue { color: #3f9ad8; }
.glyph sub, .glyph sup { font-weight: 700; font-size: 10px; }
.hat { align-self: flex-start; margin-top: 4px; }
.pressed { border: 1px solid #b0b0b0; border-radius: 5px; background: #575757; }
.gallery { display: flex; justify-content: space-between; margin: 8px 13px 0 11px; height: 76px; border: 1px solid #858585; border-radius: 5px; }
.cards { display: flex; gap: 10px; padding: 6px 0 0 6px; }
.card { width: 125px; height: 60px; background: #fff; color: #000; font-family: Lato, sans-serif; font-size: 15px; white-space: nowrap; }
.selected { outline: 1px solid #b8b8b8; outline-offset: 4px; }
.card.h1 { font-weight: 300; font-size: 25px; color: #2f5496; }
.card.h2 { font-weight: 300; font-size: 20px; color: #2f5496; }
.card.title { font-weight: 300; font-size: 42px; }
.spin { display: grid; grid-template-rows: 1fr 1fr 1fr; width: 19px; border-left: 1px solid #858585; }
.spin button + button { border-top: 1px solid #858585; }
.g-edit .stack { padding-left: 16px; }
.g-edit .row3 { gap: 5px; }
.find-chev { margin-left: 9px; }
.g-edit .select { gap: 4px; }
.collapse { align-self: flex-end; margin: 0 11px 2px auto; }
.ribbon > .group:nth-last-child(2) { margin-right: 57px; }

/* document */
.canvas { flex: 1; display: flex; min-height: 0; }
.desk { flex: 1; overflow: hidden; padding-top: 21px; background: linear-gradient(90deg, #29262c 0%, #2e2930 25%, #37292c 78%, #2e2b2b 100%); }
.page { width: 992px; min-height: 1403px; margin: 0 auto; background: #fff; color: #000; border: 1px solid #777; padding: 112px 100px 112px 119px; font-family: Lato, "Open Sans", sans-serif; font-size: 17px; }
.page sub { vertical-align: -3px; }
.page sup { vertical-align: 6px; }
.ln { display: flex; align-items: center; height: 37px; margin: 0; white-space: pre; }
.frac-ln { height: 47px; }
.wide-ln { height: 51px; }
.bold { font-weight: 700; }
.m { font-family: "Liberation Serif", serif; font-size: 20px; }
.m sub, .m sup { font-family: "DejaVu Serif", serif; font-size: 12px; }
.gram { border-bottom: 4px double #2f6be0; }
.fr { display: flex; flex-direction: column; align-items: center; font-family: "DejaVu Serif", serif; font-size: 13px; line-height: 19px; margin-right: 4px; }
.fr > :first-child { border-bottom: 1px solid #000; align-self: stretch; text-align: center; }
.fr sup { font-size: 10px; vertical-align: 4px; }
.tight { margin: 0; }
.big, .huge { font-family: "Liberation Serif", serif; font-size: 24px; line-height: 24px; }
.huge { font-size: 31px; font-family: "Open Sans", sans-serif; font-weight: 300; line-height: 38px; padding-bottom: 6px; }
.brace { margin: 0 -2px; }
.lim { display: flex; flex-direction: column; font-family: "DejaVu Serif", serif; font-size: 12px; line-height: 12px; margin-right: 4px; }
.sum { font-size: 21px; }
.tab { margin-left: 46px; }
.tab2 { margin-left: 22px; }
.colon { margin: 0 18px 0 9px; }
.step { margin-left: 27px; }
.indent { padding-left: 249px; }
.scroll { width: 22px; background: #3a3a3a; border-radius: 10px; display: flex; flex-direction: column; align-items: center; padding: 6px 0; gap: 5px; }
.track { flex: 1; width: 11px; }
.thumb { height: 53%; border-radius: 6px; background: #c4c4c4; }

/* status bar */
.status { display: flex; align-items: center; height: 28px; flex: none; background: #363636; font-size: 12px; padding: 0 10px; border-bottom: 1px solid #4b4144; white-space: nowrap; }
.st-words { margin: 0 24px 0 30px; }
.st-lang { margin: 0 27px 0 23px; }
.st-acc { margin-left: 4px; }
.status-right { margin-left: auto; display: flex; align-items: center; height: 100%; }
.focus { gap: 3px; margin-right: 14px; }
.view { width: 50px; height: 27px; }
.on { background: #444; }
.zoom-btn { width: 10px; margin-left: 6px; }
.zoom { appearance: none; width: 125px; height: 14px; margin: 0 0 0 6px; background: linear-gradient(#b5b5b5, #b5b5b5) center / 100% 1px no-repeat; }
.zoom::-webkit-slider-thumb { appearance: none; width: 6px; height: 14px; background: #c4c4c4; }
.pct { margin-left: 17px; }

/* taskbar */
.taskbar { display: grid; grid-template-columns: 1fr auto 1fr; align-items: center; height: 59px; flex: none; background: linear-gradient(90deg, #251e30 0%, #241b30 25%, #321b33 34%, #31221f 46%, #35221f 52%, #42181a 60%, #461510 75%, #3c1812 85%, #321a1e 100%); }
.weather { display: flex; gap: 7px; padding-left: 27px; align-items: center; }
.dim { color: #cfcad2; }
.dock { display: flex; align-items: center; height: 100%; }
.app-ic { position: relative; width: 55px; height: 50px; }
.start { width: 56px; }
.tsearch { width: 125px; height: 40px; margin: 0 4px; border-radius: 20px; background: #3b2a42; border: 1px solid #45344a; gap: 6px; }
.current, .alert { width: 49px; margin: 0 3px; border-radius: 6px; background: #ffffff14; }
.run::after, .current::after, .alert::after { content: ""; position: absolute; bottom: 1px; left: calc(50% - 4px); width: 8px; height: 4px; border-radius: 2px; background: #a09a9a; }
.current::after { left: calc(50% - 10px); width: 20px; background: #dc9be4; }
.alert::after { background: #ff99a4; }
.badge { position: absolute; top: 2px; right: 3px; width: 25px; height: 20px; border-radius: 10px; background: #dc9be4; color: #111; font-size: 13px; line-height: 20px; text-align: center; }
.tray { display: flex; align-items: center; justify-content: flex-end; gap: 10px; padding-right: 24px; }
.lang { width: 33px; text-align: center; margin: 0 10px 0 8px; }
.clock { font-size: 15px; text-align: right; margin-left: 7px; }
.notif { width: 20px; height: 20px; border-radius: 50%; background: #dc9be4; color: #111; font-size: 12px; text-align: center; }
```
